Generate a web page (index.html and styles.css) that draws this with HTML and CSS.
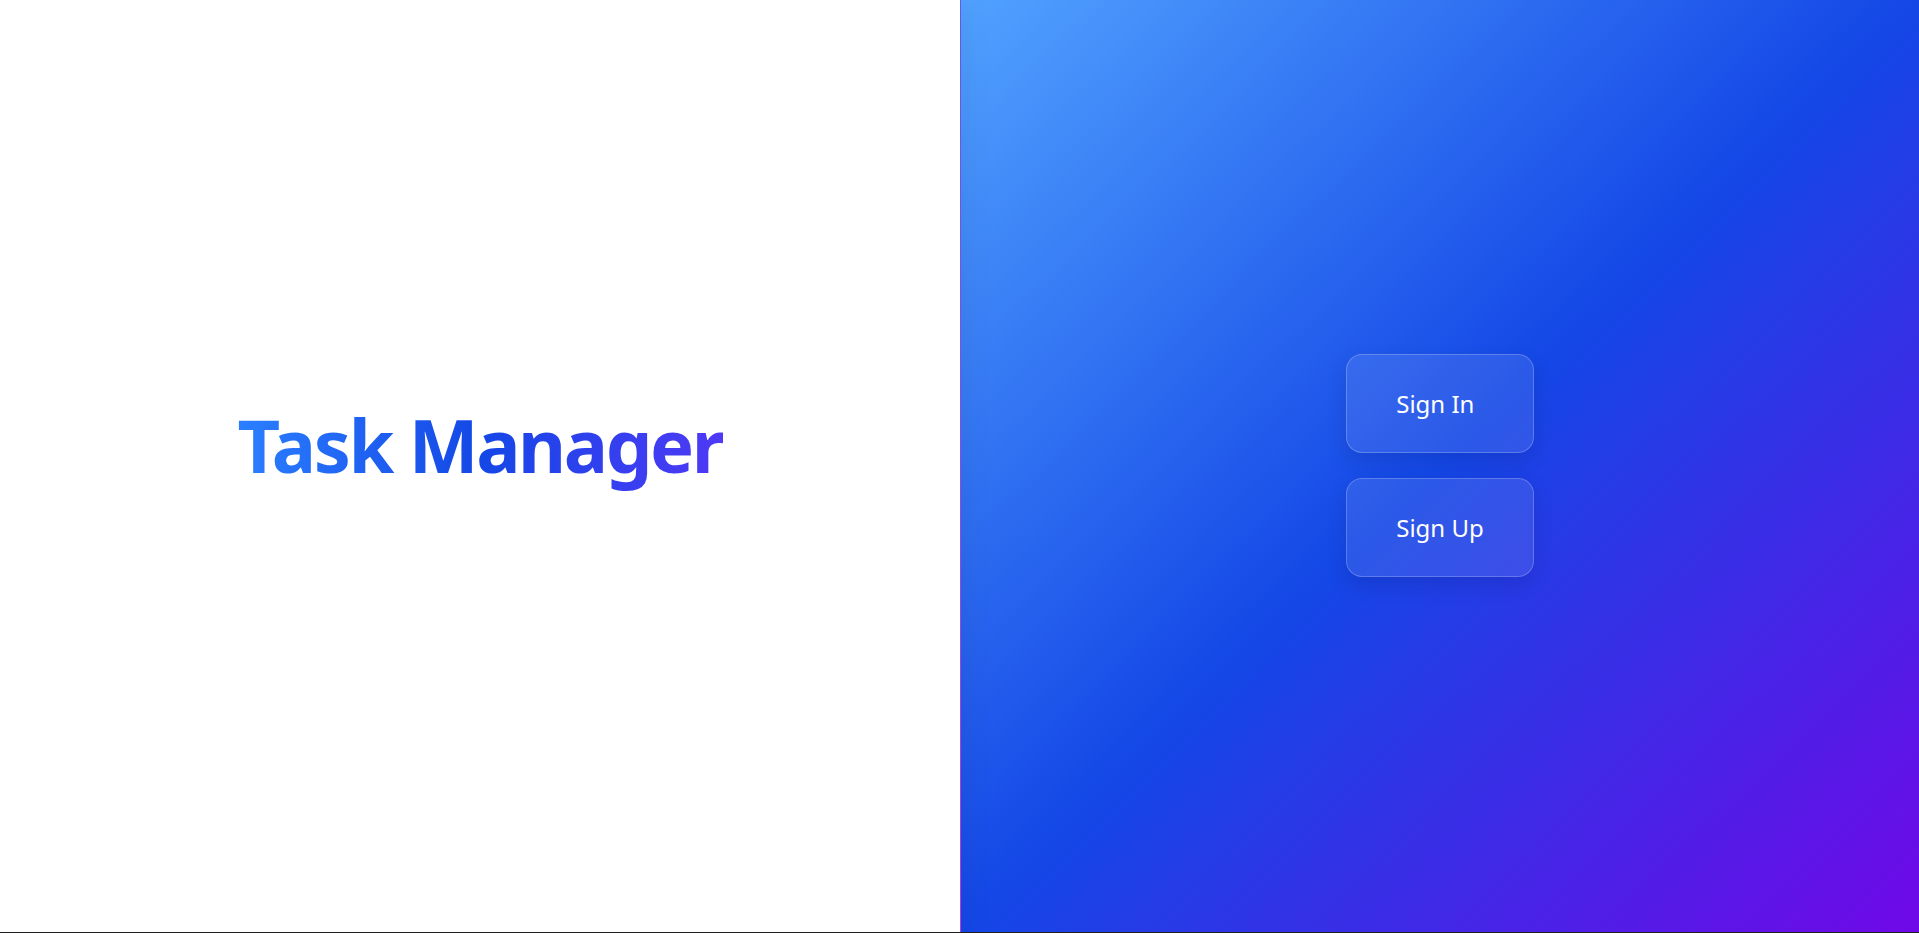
FILE: index.html
```html
<!DOCTYPE html>
<html lang="en">
<head>
    <meta charset="UTF-8">
    <title>Task Manager</title>
    <meta name="viewport" content="width=device-width, initial-scale=1.0">
    <link rel="stylesheet" href="styles.css">
</head>
<body>
    <div class="split">
        <section class="brand-side">
            <h1 class="brand-title">Task Manager</h1>
        </section>
        <section class="auth-side">
            <div class="auth-actions">
                <a class="auth-btn" href="#">Sign In</a>
                <a class="auth-btn" href="#">Sign Up</a>
            </div>
        </section>
    </div>
</body>
</html>
```

FILE: styles.css
```css
html, body {
    height: 100%;
    margin: 0;
    padding: 0;
    overflow: hidden;
}
body {
    background: #1f1f1f;
    font-family: "Noto Sans", "Open Sans", Arial, sans-serif;
}
.split {
    display: flex;
    height: calc(100vh - 1px);
}
.brand-side {
    position: relative;
    z-index: 1;
    flex: 0 0 960px;
    display: flex;
    justify-content: center;
    align-items: center;
    background: #fff;
    box-shadow: 4px 0 30px rgba(0,0,0,0.07);
}
.brand-title {
    display: inline-block;
    margin: 0 0 44px 0;
    font-size: 74px;
    font-weight: 700;
    letter-spacing: -2.4px;
    background: linear-gradient(90deg, #2b7fff, #1447e6 50%, #4f39f6);
    -webkit-background-clip: text;
    background-clip: text;
    color: transparent;
}
.auth-side {
    flex: 1;
    display: flex;
    justify-content: center;
    align-items: center;
    border-left: 1px solid;
    border-image: linear-gradient(180deg, #6a5cf0, #c03ee8) 1;
    background: linear-gradient(to bottom right, #51a2ff 0%, #1447e6 50%, #7008e7 100%);
}
.auth-actions {
    display: flex;
    flex-direction: column;
    gap: 25px;
    margin-bottom: 1px;
}
.auth-btn {
    display: flex;
    align-items: center;
    height: 97px;
    padding: 0 49px;
    border-radius: 16px;
    border: 1px solid rgba(255,255,255,0.22);
    background: rgba(255,255,255,0.1);
    color: #fff;
    text-decoration: none;
    font-size: 24px;
    box-shadow: 0 8px 20px rgba(0,0,40,0.12);
}
```
